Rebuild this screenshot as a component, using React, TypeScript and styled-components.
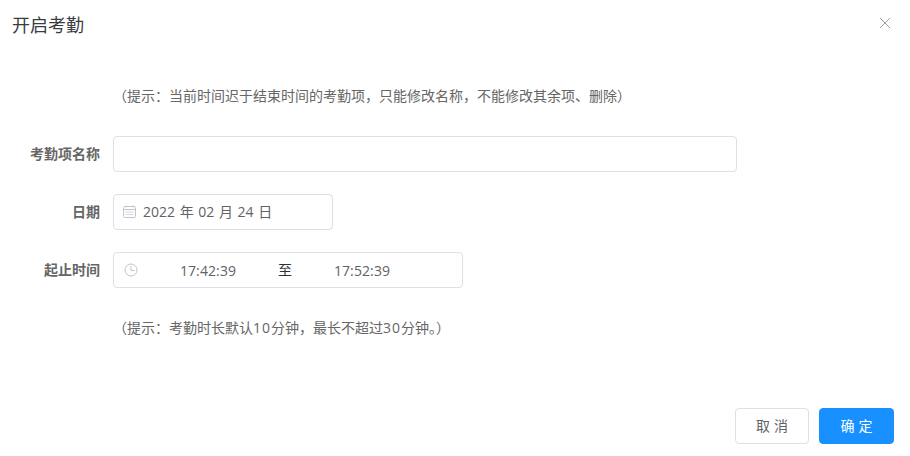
import React from "react";
import styled, { createGlobalStyle } from "styled-components";

const Global = createGlobalStyle`
  html, body { margin: 0; padding: 0; background: #fff; }
  body { font-family: "Open Sans", "Noto Sans CJK SC", sans-serif; color: #606266; }
  * { box-sizing: border-box; }
`;

const Dialog = styled.div`
  width: 910px;
  height: 456px;
  display: flex;
  flex-direction: column;
  background: #fff;
`;

const Header = styled.header`
  height: 52px;
  padding: 0 19px 0 12px;
  display: flex;
  align-items: center;
  justify-content: space-between;
`;

const Title = styled.h2`
  margin: 0 0 2px;
  font-size: 18px;
  font-weight: 400;
  line-height: 24px;
  color: #3a3c40;
`;

const CloseButton = styled.span`
  display: flex;
  margin-top: -6px;
  color: #999ca1;
`;

const Body = styled.div`
  flex: 1;
  display: flex;
  flex-direction: column;
  padding-top: 34px;
`;

const Row = styled.div<{ $mt: number }>`
  display: flex;
  align-items: center;
  margin-top: ${(p) => p.$mt}px;
`;

const Label = styled.label`
  width: 100px;
  margin: 0 13px 2px 0;
  text-align: right;
  font-size: 14px;
  font-weight: 700;
  color: #666;
`;

const Hint = styled.p`
  margin: 0 0 0 113px;
  font-size: 14px;
  line-height: 20px;
  color: #666;
`;

const Num = styled.span`
  letter-spacing: 1px;
`;

const Field = styled.div<{ $w: number; $pad: number }>`
  width: ${(p) => p.$w}px;
  height: 36px;
  display: flex;
  align-items: center;
  padding-left: ${(p) => p.$pad}px;
  border: 1px solid #dcdfe6;
  border-radius: 4px;
  background: #fff;
  font-size: 14px;
  color: #606266;
`;

const Icon = styled.svg`
  width: 14px;
  height: 14px;
  flex: none;
  color: #c0c4cc;
`;

const DateText = styled.span`
  margin: 0 0 2px 6px;
  word-spacing: 1px;
`;

const TimeRange = styled.div`
  margin-left: 7px;
  display: flex;
  align-items: center;
`;

const TimeValue = styled.span`
  width: 126px;
  text-align: center;
  letter-spacing: 0.1px;
`;

const Sep = styled.span`
  width: 28px;
  margin-bottom: 2px;
  text-align: center;
  color: #303133;
`;

const Footer = styled.footer`
  display: flex;
  justify-content: flex-end;
  gap: 10px;
  padding: 0 16px 12px 0;
`;

const Button = styled.button<{ $primary?: boolean }>`
  width: ${(p) => (p.$primary ? 75 : 74)}px;
  height: 36px;
  padding: 0 0 2px;
  border: 1px solid ${(p) => (p.$primary ? "#1890ff" : "#dcdfe6")};
  border-radius: 4px;
  background: ${(p) => (p.$primary ? "#1890ff" : "#fff")};
  color: ${(p) => (p.$primary ? "#fff" : "#606266")};
  font-family: inherit;
  font-size: 14px;
  word-spacing: 0.5px;
`;

export default function App() {
  return (
    <>
      <Global />
      <Dialog>
        <Header>
          <Title>开启考勤</Title>
          <CloseButton>
            <svg width="12" height="12" viewBox="0 0 12 12" fill="none" stroke="currentColor" strokeWidth="1">
              <path d="M1 1l10 10M11 1L1 11" />
            </svg>
          </CloseButton>
        </Header>
        <Body>
          <Hint>（提示：当前时间迟于结束时间的考勤项，只能修改名称，不能修改其余项、删除）</Hint>
          <Row $mt={30}>
            <Label>考勤项名称</Label>
            <Field $w={624} $pad={10} />
          </Row>
          <Row $mt={22}>
            <Label>日期</Label>
            <Field $w={220} $pad={9}>
              <Icon viewBox="0 0 14 14" fill="none" stroke="currentColor" strokeWidth="1">
                <rect x="0.5" y="1.5" width="12" height="11" rx="1" />
                <path d="M0.5 4.5h12M3 0.5v2M10 0.5v2" />
                <path d="M2.5 7h8M2.5 9.5h8" strokeOpacity="0.7" />
              </Icon>
              <DateText>2022 年 02 月 24 日</DateText>
            </Field>
          </Row>
          <Row $mt={22}>
            <Label>起止时间</Label>
            <Field $w={350} $pad={10}>
              <Icon viewBox="0 0 14 14" fill="none" stroke="currentColor" strokeWidth="1">
                <circle cx="7" cy="7" r="6" />
                <path d="M7 3v4.5h3.5" />
              </Icon>
              <TimeRange>
                <TimeValue>17:42:39</TimeValue>
                <Sep>至</Sep>
                <TimeValue>17:52:39</TimeValue>
              </TimeRange>
            </Field>
          </Row>
          <Row $mt={30}>
            <Hint>
              （提示：考勤时长默认<Num>10</Num>分钟，最长不超过<Num>30</Num>分钟。）
            </Hint>
          </Row>
        </Body>
        <Footer>
          <Button>取 消</Button>
          <Button $primary>确 定</Button>
        </Footer>
      </Dialog>
    </>
  );
}
